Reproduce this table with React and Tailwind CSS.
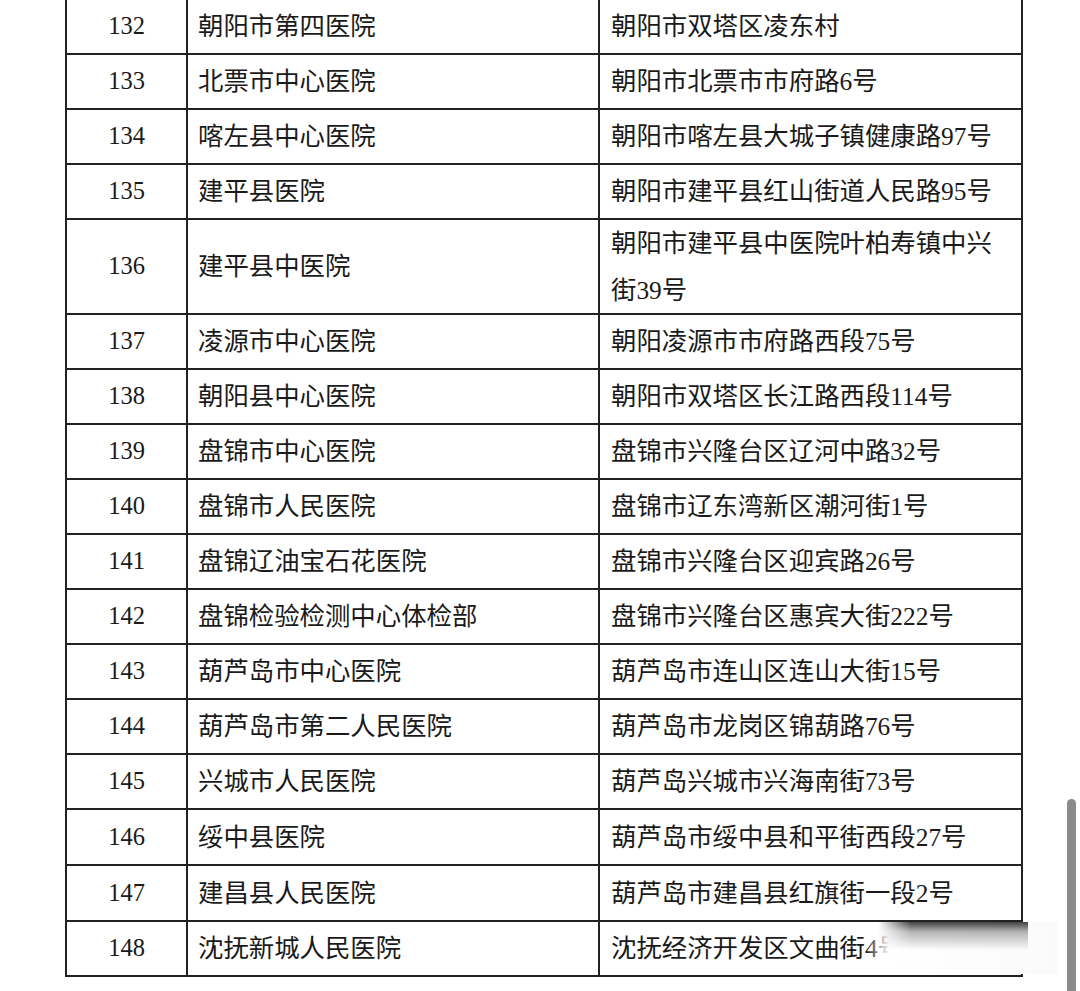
import React from 'react';

const rows = [
  ['132', '朝阳市第四医院', '朝阳市双塔区凌东村'],
  ['133', '北票市中心医院', '朝阳市北票市市府路6号'],
  ['134', '喀左县中心医院', '朝阳市喀左县大城子镇健康路97号'],
  ['135', '建平县医院', '朝阳市建平县红山街道人民路95号'],
  ['136', '建平县中医院', ['朝阳市建平县中医院叶柏寿镇中兴', '街39号']],
  ['137', '凌源市中心医院', '朝阳凌源市市府路西段75号'],
  ['138', '朝阳县中心医院', '朝阳市双塔区长江路西段114号'],
  ['139', '盘锦市中心医院', '盘锦市兴隆台区辽河中路32号'],
  ['140', '盘锦市人民医院', '盘锦市辽东湾新区潮河街1号'],
  ['141', '盘锦辽油宝石花医院', '盘锦市兴隆台区迎宾路26号'],
  ['142', '盘锦检验检测中心体检部', '盘锦市兴隆台区惠宾大街222号'],
  ['143', '葫芦岛市中心医院', '葫芦岛市连山区连山大街15号'],
  ['144', '葫芦岛市第二人民医院', '葫芦岛市龙岗区锦葫路76号'],
  ['145', '兴城市人民医院', '葫芦岛兴城市兴海南街73号'],
  ['146', '绥中县医院', '葫芦岛市绥中县和平街西段27号'],
  ['147', '建昌县人民医院', '葫芦岛市建昌县红旗街一段2号'],
  ['148', '沈抚新城人民医院', '沈抚经济开发区文曲街4号'],
];

// row heights (incl. bottom border), measured off the scan
const heightOf = (no) => {
  if (no === '136') return 'h-[95px]';
  if (no === '146' || no === '147') return 'h-[56px]';
  return 'h-[55px]';
};

const cjk = "font-['Liberation_Serif','Noto_Sans_CJK_SC',serif]";

export default function App() {
  return (
    <div className="relative w-[1080px] h-[991px] overflow-hidden bg-white text-[#1a1a1a]">
      {/* Table */}
      <div className="ml-[65px] mt-[-2px] w-[958px] border-2 border-b-0 border-[#222]">
        {rows.map(([no, name, addr]) => {
          const tall = Array.isArray(addr);
          return (
            <div key={no} className={`flex border-b-2 border-[#222] ${heightOf(no)}`}>
              <div className="w-[121px] shrink-0 flex items-center justify-center border-r-2 border-[#222] font-['Liberation_Serif',serif] text-[24.5px]">
                {no}
              </div>
              <div className={`w-[412px] shrink-0 flex items-center pl-[10px] border-r-2 border-[#222] text-[25.4px] ${cjk}`}>
                {name}
              </div>
              <div className={`flex-1 flex items-center pl-[11px] text-[25.4px] whitespace-nowrap ${cjk}`}>
                {tall ? (
                  <div className="leading-[47px]">
                    {addr[0]}
                    <br />
                    {addr[1]}
                  </div>
                ) : (
                  addr
                )}
              </div>
            </div>
          );
        })}
      </div>

      {/* Smudge over last cell */}
      <div className="absolute left-[866px] top-[922px] w-[192px] h-[52px] bg-[linear-gradient(to_right,rgba(255,255,255,0)_0%,#fff_12%,#fafafa_100%)]" />
      <div className="absolute left-[878px] top-[922px] w-[150px] h-[28px] bg-[linear-gradient(to_bottom,rgba(55,55,55,0.95)_0%,rgba(120,120,120,0.55)_35%,rgba(255,255,255,0)_100%)] [mask-image:linear-gradient(to_right,transparent_0%,black_22%,black_100%)]" />

      {/* Scrollbar */}
      <div className="absolute left-[1067px] top-[799px] w-[9px] h-[200px] rounded-t-full bg-[#8a8a8a]" />
    </div>
  );
}
